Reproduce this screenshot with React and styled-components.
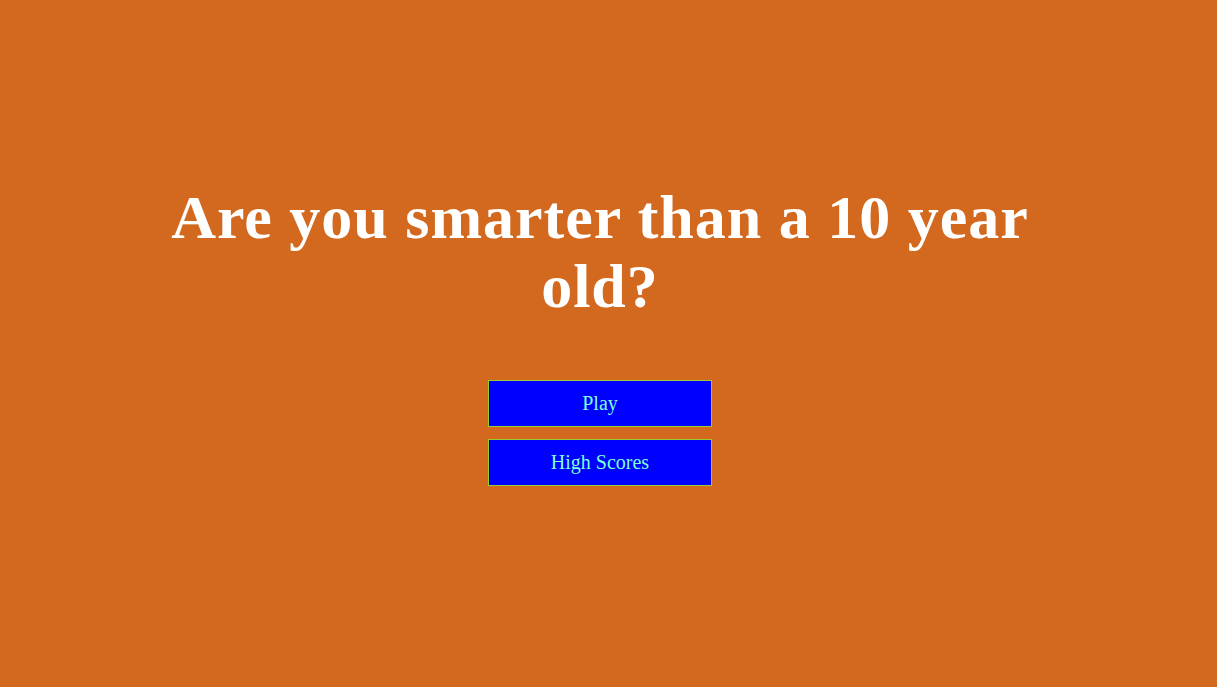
import React from "react";
import styled, { createGlobalStyle } from "styled-components";

const Global = createGlobalStyle`
  html, body { margin: 0; padding: 0; background: #d2691e; }
  body { font-family: "Liberation Serif", "DejaVu Serif", serif; }
`;

const Page = styled.main`
  box-sizing: border-box;
  width: 1200px;
  min-height: 687px;
  padding-top: 183px;
  display: flex;
  flex-direction: column;
  align-items: center;
`;

const Title = styled.h1`
  margin: 0 0 59px;
  max-width: 920px;
  color: #ffffff;
  font-size: 62px;
  line-height: 69px;
  font-weight: 700;
  letter-spacing: 1px;
  text-align: center;
`;

const Menu = styled.nav`
  display: flex;
  flex-direction: column;
  gap: 12px;
`;

const MenuButton = styled.button`
  box-sizing: border-box;
  width: 224px;
  height: 47px;
  background: #0000ff;
  border: 1px solid #9acd32;
  color: #7fffd4;
  font-family: "Liberation Serif", "DejaVu Serif", serif;
  font-size: 20px;
  cursor: pointer;
`;

export default function App() {
  return (
    <>
      <Global />
      <Page>
        <Title>Are you smarter than a 10 year old?</Title>
        <Menu>
          <MenuButton>Play</MenuButton>
          <MenuButton>High Scores</MenuButton>
        </Menu>
      </Page>
    </>
  );
}
